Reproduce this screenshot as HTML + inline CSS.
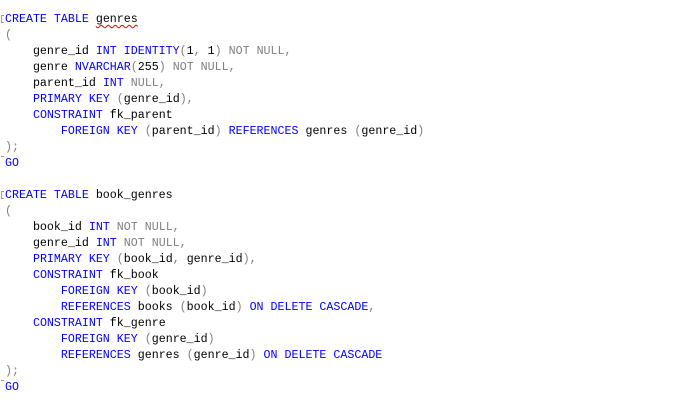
<!DOCTYPE html>
<html><head><style>
html,body{margin:0;padding:0;background:#fff;width:697px;height:411px;overflow:hidden}
pre{position:absolute;left:5px;top:12px;margin:0;font-family:"Liberation Mono",monospace;font-size:11.65px;line-height:16px;color:#000}
.k{color:#0000ff}.g{color:#808080}
.sq{text-decoration:underline wavy #e00;text-decoration-thickness:1px;text-underline-offset:2px}
.m{position:absolute;left:1px;width:3px;height:8px;border:1px solid #999;border-right:none;box-sizing:border-box}
.e{position:absolute;left:1px;width:3px;height:1px;background:#999}
</style></head><body>
<div class="m" style="top:15px"></div>
<div class="e" style="top:156px"></div>
<div class="m" style="top:191px"></div>
<div class="e" style="top:380px"></div>
<pre><span class="k">CREATE TABLE</span> <span class="sq">genres</span>
<span class="g">(</span>
    genre_id <span class="k">INT IDENTITY</span><span class="g">(</span>1<span class="g">,</span> 1<span class="g">)</span> <span class="g">NOT NULL,</span>
    genre <span class="k">NVARCHAR</span><span class="g">(</span>255<span class="g">)</span> <span class="g">NOT NULL,</span>
    parent_id <span class="k">INT</span> <span class="g">NULL,</span>
    <span class="k">PRIMARY KEY</span> <span class="g">(</span>genre_id<span class="g">),</span>
    <span class="k">CONSTRAINT</span> fk_parent
        <span class="k">FOREIGN KEY</span> <span class="g">(</span>parent_id<span class="g">)</span> <span class="k">REFERENCES</span> genres <span class="g">(</span>genre_id<span class="g">)</span>
<span class="g">);</span>
<span class="k">GO</span>

<span class="k">CREATE TABLE</span> book_genres
<span class="g">(</span>
    book_id <span class="k">INT</span> <span class="g">NOT NULL,</span>
    genre_id <span class="k">INT</span> <span class="g">NOT NULL,</span>
    <span class="k">PRIMARY KEY</span> <span class="g">(</span>book_id<span class="g">,</span> genre_id<span class="g">),</span>
    <span class="k">CONSTRAINT</span> fk_book
        <span class="k">FOREIGN KEY</span> <span class="g">(</span>book_id<span class="g">)</span>
        <span class="k">REFERENCES</span> books <span class="g">(</span>book_id<span class="g">)</span> <span class="k">ON DELETE CASCADE</span><span class="g">,</span>
    <span class="k">CONSTRAINT</span> fk_genre
        <span class="k">FOREIGN KEY</span> <span class="g">(</span>genre_id<span class="g">)</span>
        <span class="k">REFERENCES</span> genres <span class="g">(</span>genre_id<span class="g">)</span> <span class="k">ON DELETE CASCADE</span>
<span class="g">);</span>
<span class="k">GO</span></pre>
</body></html>
